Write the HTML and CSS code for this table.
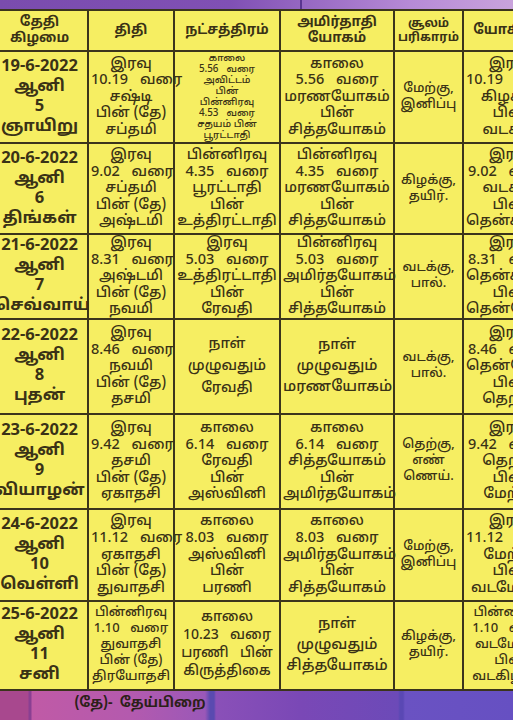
FILE: index.html
```html
<!DOCTYPE html>
<html lang="ta">
<head>
<meta charset="utf-8">
<title>பஞ்சாங்கம்</title>
<link rel="stylesheet" href="styles.css">
</head>
<body>
<div class="page">
  <div class="topband"><span class="tb-a"></span><span class="tb-b"></span></div>
  <div class="sheet">
    <table class="panchang">
      <colgroup>
        <col class="c1"><col class="c2"><col class="c3"><col class="c4"><col class="c5"><col class="c6">
      </colgroup>
      <thead>
        <tr class="rh">
          <th><span class="l">தேதி</span><span class="l">கிழமை</span></th>
          <th><span class="l">திதி</span></th>
          <th><span class="l">நட்சத்திரம்</span></th>
          <th><span class="l">அமிர்தாதி</span><span class="l">யோகம்</span></th>
          <th class="small"><span class="l">சூலம்</span><span class="l">பரிகாரம்</span></th>
          <th><span class="l">யோகினி</span></th>
        </tr>
      </thead>
      <tbody>
        <tr class="r1">
          <td class="date"><span class="l">19-6-2022</span><span class="l">ஆனி</span><span class="l">5</span><span class="l">ஞாயிறு</span></td>
          <td><span class="l">இரவு</span><span class="l w">10.19 வரை</span><span class="l">சஷ்டி</span><span class="l">பின் (தே)</span><span class="l">சப்தமி</span></td>
          <td class="tiny"><span class="l">காலை</span><span class="l w">5.56 வரை</span><span class="l">அவிட்டம்</span><span class="l">பின்</span><span class="l">பின்னிரவு</span><span class="l w">4.53 வரை</span><span class="l">சதயம் பின்</span><span class="l">பூரட்டாதி</span></td>
          <td><span class="l">காலை</span><span class="l w">5.56 வரை</span><span class="l">மரணயோகம்</span><span class="l">பின்</span><span class="l">சித்தயோகம்</span></td>
          <td class="sul"><span class="l">மேற்கு,</span><span class="l">இனிப்பு</span></td>
          <td><span class="l">இரவு</span><span class="l w">10.19 வரை</span><span class="l">கிழக்கு</span><span class="l">பின்</span><span class="l">வடக்கு</span></td>
        </tr>
        <tr class="r2">
          <td class="date"><span class="l">20-6-2022</span><span class="l">ஆனி</span><span class="l">6</span><span class="l">திங்கள்</span></td>
          <td><span class="l">இரவு</span><span class="l w">9.02 வரை</span><span class="l">சப்தமி</span><span class="l">பின் (தே)</span><span class="l">அஷ்டமி</span></td>
          <td><span class="l">பின்னிரவு</span><span class="l w">4.35 வரை</span><span class="l">பூரட்டாதி</span><span class="l">பின்</span><span class="l">உத்திரட்டாதி</span></td>
          <td><span class="l">பின்னிரவு</span><span class="l w">4.35 வரை</span><span class="l">மரணயோகம்</span><span class="l">பின்</span><span class="l">சித்தயோகம்</span></td>
          <td class="sul"><span class="l">கிழக்கு,</span><span class="l">தயிர்.</span></td>
          <td><span class="l">இரவு</span><span class="l w">9.02 வரை</span><span class="l">வடக்கு</span><span class="l">பின்</span><span class="l">தென்கிழக்கு</span></td>
        </tr>
        <tr class="r3">
          <td class="date"><span class="l">21-6-2022</span><span class="l">ஆனி</span><span class="l">7</span><span class="l">செவ்வாய்</span></td>
          <td><span class="l">இரவு</span><span class="l w">8.31 வரை</span><span class="l">அஷ்டமி</span><span class="l">பின் (தே)</span><span class="l">நவமி</span></td>
          <td><span class="l">இரவு</span><span class="l w">5.03 வரை</span><span class="l">உத்திரட்டாதி</span><span class="l">பின்</span><span class="l">ரேவதி</span></td>
          <td><span class="l">பின்னிரவு</span><span class="l w">5.03 வரை</span><span class="l">அமிர்தயோகம்</span><span class="l">பின்</span><span class="l">சித்தயோகம்</span></td>
          <td class="sul"><span class="l">வடக்கு,</span><span class="l">பால்.</span></td>
          <td><span class="l">இரவு</span><span class="l w">8.31 வரை</span><span class="l">தென்கிழக்கு</span><span class="l">பின்</span><span class="l">தென்மேற்கு</span></td>
        </tr>
        <tr class="r4">
          <td class="date"><span class="l">22-6-2022</span><span class="l">ஆனி</span><span class="l">8</span><span class="l">புதன்</span></td>
          <td><span class="l">இரவு</span><span class="l w">8.46 வரை</span><span class="l">நவமி</span><span class="l">பின் (தே)</span><span class="l">தசமி</span></td>
          <td class="spread"><span class="l">நாள்</span><span class="l">முழுவதும்</span><span class="l">ரேவதி</span></td>
          <td class="spread big"><span class="l">நாள்</span><span class="l">முழுவதும்</span><span class="l">மரணயோகம்</span></td>
          <td class="sul"><span class="l">வடக்கு,</span><span class="l">பால்.</span></td>
          <td><span class="l">இரவு</span><span class="l w">8.46 வரை</span><span class="l">தென்மேற்கு</span><span class="l">பின்</span><span class="l">தெற்கு</span></td>
        </tr>
        <tr class="r5">
          <td class="date"><span class="l">23-6-2022</span><span class="l">ஆனி</span><span class="l">9</span><span class="l">வியாழன்</span></td>
          <td><span class="l">இரவு</span><span class="l w">9.42 வரை</span><span class="l">தசமி</span><span class="l">பின் (தே)</span><span class="l">ஏகாதசி</span></td>
          <td><span class="l">காலை</span><span class="l w">6.14 வரை</span><span class="l">ரேவதி</span><span class="l">பின்</span><span class="l">அஸ்வினி</span></td>
          <td><span class="l">காலை</span><span class="l w">6.14 வரை</span><span class="l">சித்தயோகம்</span><span class="l">பின்</span><span class="l">அமிர்தயோகம்</span></td>
          <td class="sul"><span class="l">தெற்கு,</span><span class="l">எண்</span><span class="l">ணெய்.</span></td>
          <td><span class="l">இரவு</span><span class="l w">9.42 வரை</span><span class="l">தெற்கு</span><span class="l">பின்</span><span class="l">மேற்கு</span></td>
        </tr>
        <tr class="r6">
          <td class="date"><span class="l">24-6-2022</span><span class="l">ஆனி</span><span class="l">10</span><span class="l">வெள்ளி</span></td>
          <td><span class="l">இரவு</span><span class="l w">11.12 வரை</span><span class="l">ஏகாதசி</span><span class="l">பின் (தே)</span><span class="l">துவாதசி</span></td>
          <td><span class="l">காலை</span><span class="l w">8.03 வரை</span><span class="l">அஸ்வினி</span><span class="l">பின்</span><span class="l">பரணி</span></td>
          <td><span class="l">காலை</span><span class="l w">8.03 வரை</span><span class="l">அமிர்தயோகம்</span><span class="l">பின்</span><span class="l">சித்தயோகம்</span></td>
          <td class="sul"><span class="l">மேற்கு,</span><span class="l">இனிப்பு</span></td>
          <td><span class="l">இரவு</span><span class="l w">11.12 வரை</span><span class="l">மேற்கு</span><span class="l">பின்</span><span class="l">வடமேற்கு</span></td>
        </tr>
        <tr class="r7">
          <td class="date"><span class="l">25-6-2022</span><span class="l">ஆனி</span><span class="l">11</span><span class="l">சனி</span></td>
          <td class="smaller"><span class="l">பின்னிரவு</span><span class="l w">1.10 வரை</span><span class="l">துவாதசி</span><span class="l">பின் (தே)</span><span class="l">திரயோதசி</span></td>
          <td class="mid"><span class="l">காலை</span><span class="l w">10.23 வரை</span><span class="l w">பரணி பின்</span><span class="l">கிருத்திகை</span></td>
          <td class="spread big"><span class="l">நாள்</span><span class="l">முழுவதும்</span><span class="l">சித்தயோகம்</span></td>
          <td class="sul"><span class="l">கிழக்கு,</span><span class="l">தயிர்.</span></td>
          <td class="smaller"><span class="l">பின்னிரவு</span><span class="l w">1.10 வரை</span><span class="l">வடமேற்கு</span><span class="l">பின்</span><span class="l">வடகிழக்கு</span></td>
        </tr>
      </tbody>
    </table>
  </div>
  <div class="footband">
    <p class="note">(தே)-&nbsp; தேய்பிறை</p>
  </div>
</div>
</body>
</html>
```

FILE: styles.css
```css
html, body {
  margin: 0;
  padding: 0;
}
body {
  background: #6f45b0;
  font-family: "Noto Sans Tamil", "Lohit Tamil", "Noto Sans", "Noto Sans CJK SC", sans-serif;
  color: #3a3216;
}
.page {
  width: 513px;
  height: 720px;
  overflow: hidden;
  display: flex;
  flex-direction: column;
}
.topband {
  height: 9px;
  flex: none;
  display: flex;
  background: linear-gradient(90deg, #7a4cae 0%, #8050b4 45%, #b68ad6 80%, #c9a3dc 100%);
}
.tb-a { width: 300px; border-right: 2px solid #5a3590; }
.tb-b { flex: 1; }

.sheet {
  flex: none;
  margin-left: -10px;
  width: 580px;
}
.panchang {
  border-collapse: collapse;
  table-layout: fixed;
  width: 565px;
  background: #f6ee62;
  border: 2px solid #3b341c;
}
.c1 { width: 97px; }
.c2 { width: 86px; }
.c3 { width: 106px; }
.c4 { width: 114px; }
.c5 { width: 69px; }
.c6 { width: 93px; }

.panchang th,
.panchang td {
  border: 2px solid #3b341c;
  padding: 0 2px;
  text-align: center;
  vertical-align: middle;
  font-size: 14.5px;
  line-height: 16.6px;
  font-weight: 500;
}
.l { display: block; white-space: nowrap; }
.w { word-spacing: 0.55em; }

.panchang th {
  font-weight: 700;
  font-size: 13.5px;
  line-height: 16px;
}
.panchang th.small {
  font-size: 12px;
  line-height: 14px;
}
.rh { height: 41px; }
.r1 { height: 92px; }
.r2 { height: 91px; }
.r3 { height: 84px; }
.r4 { height: 95px; }
.r5 { height: 95px; }
.r6 { height: 92px; }
.r7 { height: 89px; }

.panchang td.date {
  font-weight: 700;
  font-size: 16.5px;
  line-height: 20px;
}
.panchang td.tiny {
  font-size: 9.8px;
  line-height: 11px;
}
.panchang td.smaller {
  font-size: 13px;
  line-height: 16px;
}
.panchang td.mid {
  font-size: 14px;
  line-height: 18px;
}
.panchang td.spread {
  line-height: 22px;
}
.panchang td.big {
  font-size: 15px;
  line-height: 21px;
}
.panchang td.sul {
  font-size: 13px;
  line-height: 16px;
}

.footband {
  flex: 1;
  background:
    linear-gradient(90deg,
      #a8488e 0px, #a8488e 28px,
      #8a3f92 29px, #8a3f92 31px,
      #c05aa6 32px, #b45aae 130px, #9a58b8 205px,
      #5a4ab0 210px, #5a4ab0 214px,
      #8a50b8 216px, #7a48b6 300px, #6c4ab8 398px,
      #5a48b4 400px, #5a48b4 403px,
      #6a52c2 405px, #6650c2 513px);
}
.note {
  margin: 4px 0 0 0;
  width: 280px;
  text-align: center;
  font-size: 14px;
  font-weight: 700;
  color: #2c2018;
}
```
